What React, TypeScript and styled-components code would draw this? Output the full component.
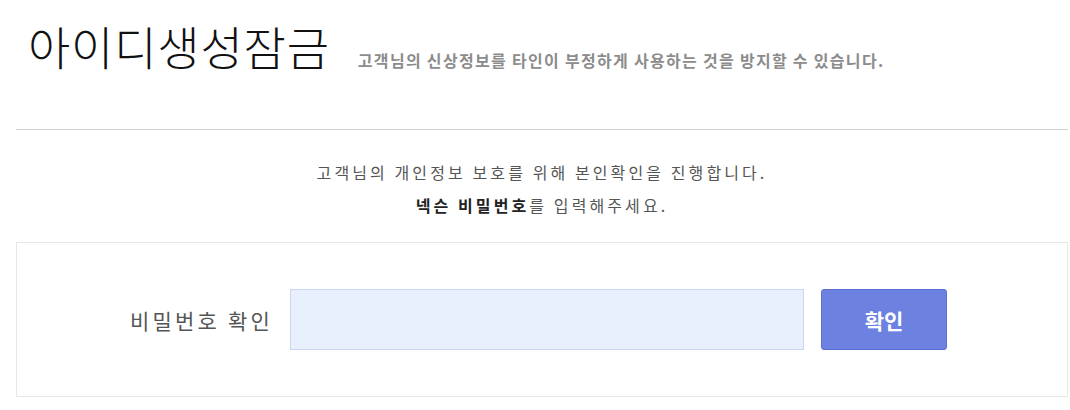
import styled, { createGlobalStyle } from 'styled-components';

const GlobalStyle = createGlobalStyle`
  body {
    margin: 0;
    background: #fff;
    font-family: 'Noto Sans CJK KR', 'Noto Sans', sans-serif;
  }
`;

const App = () => {
  return (
    <S.Page>
      <GlobalStyle />
      <S.Header>
        <S.Title>아이디생성잠금</S.Title>
        <S.Desc>고객님의 신상정보를 타인이 부정하게 사용하는 것을 방지할 수 있습니다.</S.Desc>
      </S.Header>
      <S.Divider />
      <S.Notice>
        고객님의 개인정보 보호를 위해 본인확인을 진행합니다.
        <br />
        <strong>넥슨 비밀번호</strong>를 입력해주세요.
      </S.Notice>
      <S.Box>
        <S.Label htmlFor="pw">비밀번호 확인</S.Label>
        <S.Input id="pw" type="password" />
        <S.Button type="button">확인</S.Button>
      </S.Box>
    </S.Page>
  );
};

const S = {
  Page: styled.div`
    width: 1052px;
    padding-left: 16px;
  `,
  Header: styled.div`
    display: flex;
    align-items: flex-end;
    gap: 28px;
    height: 68px;
    padding: 0 0 0 12px;
  `,
  Title: styled.h1`
    margin: 0;
    font-size: 46px;
    font-weight: 300;
    color: #111;
    line-height: 1;
    letter-spacing: 0.8px;
  `,
  Desc: styled.p`
    margin: 0 0 -4px;
    font-size: 16px;
    font-weight: 700;
    color: #8c8c8c;
    letter-spacing: 1.3px;
  `,
  Divider: styled.hr`
    margin: 61px 0 0;
    border: 0;
    border-top: 1px solid #cfcfcf;
  `,
  Notice: styled.p`
    margin: 26px 0 0;
    text-align: center;
    font-size: 16px;
    line-height: 33px;
    letter-spacing: 3.1px;
    color: #555;
    strong {
      color: #222;
      font-weight: 700;
    }
  `,
  Box: styled.div`
    display: flex;
    align-items: center;
    margin-top: 20px;
    height: 153px;
    border: 1px solid #e6e6e6;
    padding-left: 113px;
  `,
  Label: styled.label`
    font-size: 21px;
    color: #555;
    margin-right: 17px;
    letter-spacing: 3.2px;
  `,
  Input: styled.input`
    box-sizing: border-box;
    width: 514px;
    height: 61px;
    background: #e8f0fe;
    border: 1px solid #c9d5f2;
    outline: none;
    margin: 0 17px 0 0;
  `,
  Button: styled.button`
    box-sizing: border-box;
    width: 126px;
    height: 61px;
    background: #6d82e0;
    border: 1px solid #5b6fd2;
    border-radius: 3px;
    color: #fff;
    font-family: inherit;
    font-size: 21px;
    font-weight: 700;
  `,
};

export default App;
